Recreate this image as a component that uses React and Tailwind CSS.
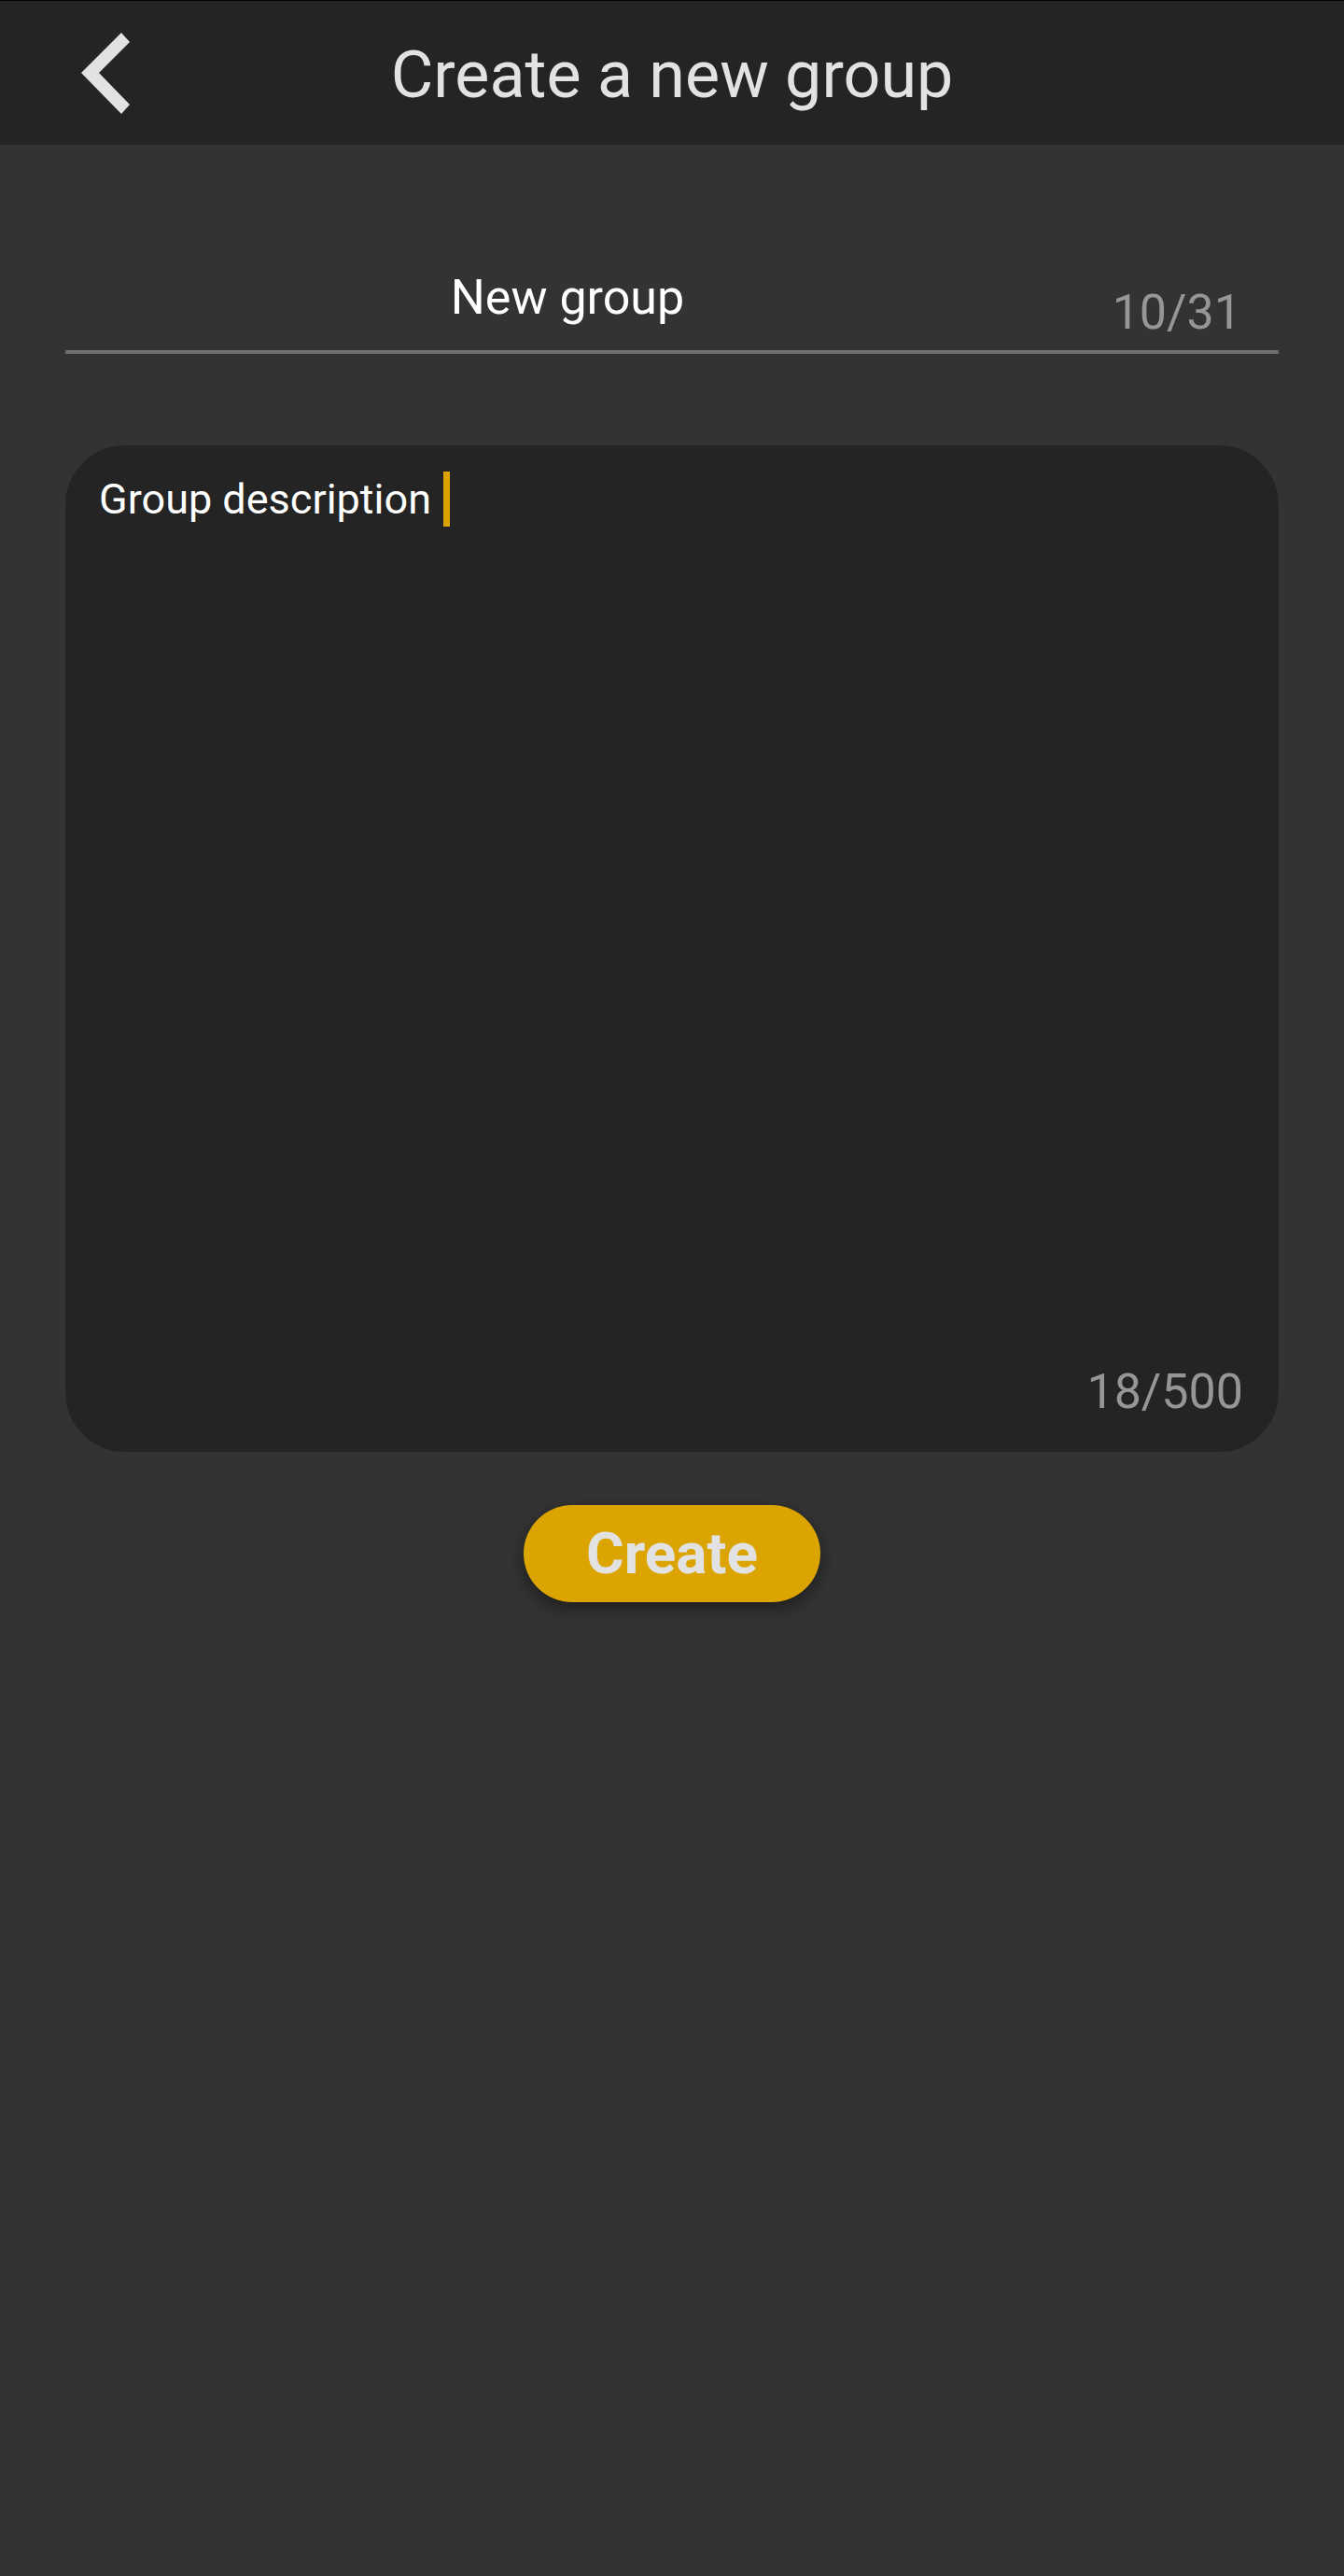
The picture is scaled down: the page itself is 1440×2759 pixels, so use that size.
import React from 'react';

const font = { fontFamily: 'Roboto, "Noto Sans", sans-serif' };

function BackChevron() {
  return (
    <svg width="70" height="100" viewBox="80 28 70 100" className="block">
      <polygon points="130,34 139,44 106,77 139,111 130,121 87,77" fill="#e2e2e2" />
    </svg>
  );
}

export default function App() {
  return (
    <div className="min-h-[2759px] w-full bg-[#333333]" style={font}>
      {/* header */}
      <div className="grid h-[155px] grid-cols-[1fr_auto_1fr] items-center border-t border-black bg-[#242424]">
        <div className="pl-[80px] pt-[1px]">
          <BackChevron />
        </div>
        <h1 className="pt-[4px] text-[70px] font-normal leading-none text-[#e2e2e2]">Create a new group</h1>
        <div />
      </div>

      <div className="flex flex-col px-[70px]">
        {/* group name */}
        <div className="mt-[134px] flex items-end border-b-4 border-[#6f6f6f]">
          <div className="flex-1 pb-[26px] text-center text-[52px] leading-[60px] text-white">New group</div>
          <div className="w-[224px] pb-[10px] pr-10 text-right text-[52px] leading-[60px] text-[#969696]">10/31</div>
        </div>

        {/* description */}
        <div className="mt-[98px] flex h-[1078px] flex-col justify-between rounded-[64px] bg-[#242424] pl-[36px] pr-[38px] pt-7 pb-[34px]">
          <div className="text-[45px] leading-[60px] text-white">
            Group description
            <span className="ml-[13px] inline-block h-[59px] w-[7px] align-top bg-[#dba400]" />
          </div>
          <div className="text-right text-[52px] leading-[60px] text-[#969696]">18/500</div>
        </div>

        {/* create button */}
        <div className="mt-[57px] flex justify-center">
          <button
            type="button"
            className="h-[104px] w-[318px] rounded-full bg-[#dba400] text-[62px] font-bold leading-none text-[#e2e2e2] shadow-[0_6px_18px_rgba(0,0,0,0.45)]"
          >
            Create
          </button>
        </div>
      </div>
    </div>
  );
}
